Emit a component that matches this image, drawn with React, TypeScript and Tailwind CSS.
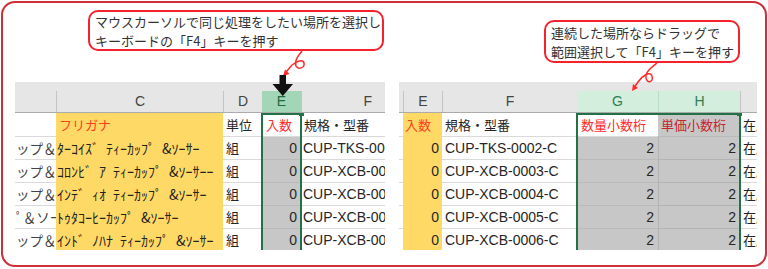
import React from 'react';

type Row = { b?: string; c: string; f: string };

const leftRows: Row[] = [
  { b: 'ップ＆ソーサー', c: 'ﾀｰｺｲｽﾞ\u2002ﾃｨｰｶｯﾌﾟ\u2002&ｿｰｻｰ', f: 'CUP-TKS-0002-C' },
  { b: 'ップ＆ソーサー', c: 'ｺﾛﾝﾋﾞ\u2002ｱ\u2002ﾃｨｰｶｯﾌﾟ\u2002&ｿｰｻｰｰ', f: 'CUP-XCB-0003-C' },
  { b: 'ップ＆ソーサー', c: 'ｲﾝﾃﾞ\u2002ｨｵ\u2002ﾃｨｰｶｯﾌﾟ\u2002&ｿｰｻｰ', f: 'CUP-XCB-0004-C' },
  { b: 'ﾟ＆ソーサー', c: 'ﾄｩﾀｺｰﾋｰｶｯﾌﾟ\u2002&ｿｰｻｰ', f: 'CUP-XCB-0005-C' },
  { b: 'ップ＆ソーサー', c: 'ｲﾝﾄﾞ\u2002ﾉﾊﾅ\u2002ﾃｨｰｶｯﾌﾟ\u2002&ｿｰｻｰ', f: 'CUP-XCB-0006-C' },
];

function Callout({ className, lines }: { className: string; lines: string[] }) {
  return (
    <div className={`rounded-[10px] border-2 border-[#f3222c] bg-white px-[5px] flex flex-col justify-center text-[13px] leading-[19px] text-[#333] whitespace-nowrap font-['Noto_Sans_CJK_JP',sans-serif] ${className}`}>
      {lines.map((l) => (
        <span key={l}>{l}</span>
      ))}
    </div>
  );
}

function LeftSheet() {
  return (
    <div className="w-[370px]">
      <div className="h-[9px] bg-[#e6e6e6]" />
      <div className="flex h-[22px] bg-[#e6e6e6] border-b border-[#ababab] text-[14px] text-[#444]">
        <div className="w-[41px]" />
        <div className="w-[167px] border-l border-[#c4c4c4] flex items-center justify-center">C</div>
        <div className="w-[39px] border-l border-[#c4c4c4] flex items-center justify-center">D</div>
        <div className="w-[39px] bg-[#a2d6b6] text-[#1f6b40] flex items-center justify-center">E</div>
        <div className="w-[84px] border-l border-[#c4c4c4] flex items-center justify-end pr-[13px]">F</div>
      </div>
      <div className="relative h-[137px] overflow-hidden text-[14px] text-[#262626]">
        <div className="flex h-[24px] font-['Noto_Sans_CJK_JP',sans-serif] text-[13px]">
          <div className="w-[41px] border-b border-[#dadada]" />
          <div className="w-[167px] bg-[#ffd966] flex items-center pl-[3px] text-[#ff3d1f]">フリガナ</div>
          <div className="w-[39px] border-b border-[#dadada] flex items-center pl-[3px]">単位</div>
          <div className="w-[39px] border-b border-[#dadada] flex items-center pl-[4px] text-[#ff2a2a]">入数</div>
          <div className="w-[84px] border-b border-[#dadada] flex items-center pl-[3px] whitespace-nowrap overflow-hidden">規格・型番</div>
        </div>
        {leftRows.map((r) => (
          <div key={r.f} className="flex h-[23px]">
            <div className="w-[41px] border-b border-[#dadada] flex items-center overflow-hidden whitespace-nowrap text-[13.5px] font-['Noto_Sans_CJK_JP',sans-serif] text-[#444] pl-[1px]">
              {r.b}
            </div>
            <div className="w-[167px] bg-[#ffd966] flex items-center overflow-hidden whitespace-nowrap pl-[1px] font-['Noto_Sans_CJK_JP',sans-serif] text-[14px] text-[#222]">
              {r.c}
            </div>
            <div className="w-[39px] border-b border-[#dadada] flex items-center pl-[3px] font-['Noto_Sans_CJK_JP',sans-serif] text-[13px]">組</div>
            <div className="w-[39px] bg-[#c7c7c7] border-b border-[#bababa] flex items-center justify-end pr-[4px]">0</div>
            <div className="w-[84px] border-b border-[#dadada] flex items-center pl-[2px] overflow-hidden whitespace-nowrap">{r.f}</div>
          </div>
        ))}
        <div className="absolute left-[246px] top-0 w-[41px] h-[150px] border-x-2 border-t-2 border-[#217346]" />
        <div className="absolute left-[284px] top-[-2px] w-[5px] h-[5px] bg-[#217346]" />
      </div>
    </div>
  );
}

function RightSheet() {
  return (
    <div className="w-[358px]">
      <div className="h-[9px] bg-[#e6e6e6]" />
      <div className="flex h-[22px] bg-[#e6e6e6] border-b border-[#ababab] text-[14px] text-[#444]">
        <div className="w-[4px]" />
        <div className="w-[39px] border-l border-[#c4c4c4] flex items-center justify-center">E</div>
        <div className="w-[135px] border-l border-[#c4c4c4] flex items-center justify-center">F</div>
        <div className="w-[81px] bg-[#d3eedd] text-[#2f7d50] flex items-center justify-center">G</div>
        <div className="w-[82px] bg-[#d3eedd] border-l border-[#b9dcc6] text-[#2f7d50] flex items-center justify-center">H</div>
        <div className="w-[17px] border-l border-[#c4c4c4]" />
      </div>
      <div className="relative h-[137px] overflow-hidden text-[14px] text-[#262626]">
        <div className="flex h-[24px] font-['Noto_Sans_CJK_JP',sans-serif] text-[13px]">
          <div className="w-[4px] border-b border-[#dadada]" />
          <div className="w-[39px] bg-[#ffd966] flex items-center pl-[2px] text-[#ff3d1f]">入数</div>
          <div className="w-[135px] border-b border-[#dadada] flex items-center pl-[3px]">規格・型番</div>
          <div className="w-[81px] border-b border-[#dadada] flex items-center pl-[4px] text-[#ff2a2a]">数量小数桁</div>
          <div className="w-[82px] bg-[#c7c7c7] border-b border-[#bababa] flex items-center pl-[3px] text-[#c4262e]">単価小数桁</div>
          <div className="w-[17px] border-b border-[#dadada] flex items-center pl-[3px] overflow-hidden whitespace-nowrap">在庫</div>
        </div>
        {leftRows.map((r) => (
          <div key={r.f} className="flex h-[23px]">
            <div className="w-[4px] border-b border-[#dadada]" />
            <div className="w-[39px] bg-[#ffd966] flex items-center justify-end pr-[3px]">0</div>
            <div className="w-[135px] border-b border-[#dadada] flex items-center pl-[3px] whitespace-nowrap">{r.f}</div>
            <div className="w-[81px] bg-[#c7c7c7] border-b border-[#bababa] flex items-center justify-end pr-[4px]">2</div>
            <div className="w-[82px] bg-[#c7c7c7] border-b border-l border-[#b3b3b3] flex items-center justify-end pr-[4px]">2</div>
            <div className="w-[17px] border-b border-[#dadada] flex items-center pl-[3px] overflow-hidden whitespace-nowrap font-['Noto_Sans_CJK_JP',sans-serif] text-[13px]">在庫</div>
          </div>
        ))}
        <div className="absolute left-[177px] top-0 w-[165px] h-[150px] border-x-2 border-t-2 border-[#217346]" />
        <div className="absolute left-[338px] top-[-2px] w-[5px] h-[5px] bg-[#217346]" />
      </div>
    </div>
  );
}

export default function App() {
  return (
    <div className="relative w-[768px] h-[269px] bg-white p-[1px] font-['Liberation_Sans','Noto_Sans_CJK_JP',sans-serif]">
      <div className="flex w-[766px] h-[266px] rounded-[14px] border-2 border-[#cf2f3b] overflow-hidden">
        <div className="w-[382px] flex flex-col">
          <div className="h-[79px] pl-[85px] pt-[7px]">
            <Callout className="w-[296px] h-[41px]" lines={['マウスカーソルで同じ処理をしたい場所を選択し', 'キーボードの「F4」キーを押す']} />
          </div>
          <div className="pl-[12px]">
            <LeftSheet />
          </div>
        </div>
        <div className="ml-[14px] w-[358px] flex flex-col">
          <div className="h-[79px] pl-[145px] pt-[17px]">
            <Callout className="w-[196px] h-[43px]" lines={['連続した場所ならドラッグで', '範囲選択して「F4」キーを押す']} />
          </div>
          <RightSheet />
        </div>
      </div>
      <svg className="absolute inset-0 pointer-events-none" width="768" height="269" viewBox="0 0 768 269">
        <path d="M302 51 C298 56 294 61 296 66 C298 70 305 68 304 63 C303 59 297 61 292 65 L286 72" fill="none" stroke="#ff2a2a" strokeWidth="1.5" />
        <polygon points="283,76 289.5,74 285,69.5" fill="#ff2a2a" />
        <path d="M657 63 C652 67 645 72 646 78 C647 84 654 82 652 76 C650 71 643 75 638 82 L634.5 87" fill="none" stroke="#ff2a2a" strokeWidth="1.5" />
        <polygon points="632,91 638,88 633,84" fill="#ff2a2a" />
        <polygon points="279.5,75 286,75 286,84 293,84 282.75,96 272.5,84 279.5,84" fill="#111" />
      </svg>
    </div>
  );
}
